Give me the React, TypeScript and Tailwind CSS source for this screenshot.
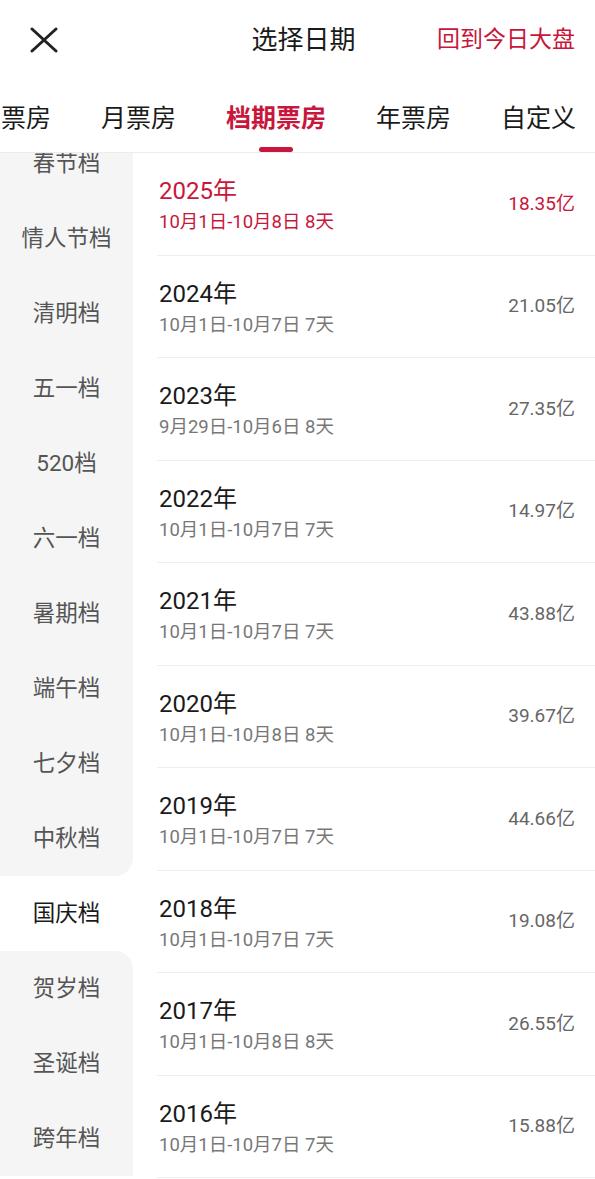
import React from "react";

const RED = "text-[#c8163c]";

const sideItems = ["春节档","情人节档","清明档","五一档","520档","六一档","暑期档","端午档","七夕档","中秋档","国庆档","贺岁档","圣诞档","跨年档"];
const selIdx = 10;

const rows = [
  { y: "2025年", d: "10月1日-10月8日 8天", v: "18.35" },
  { y: "2024年", d: "10月1日-10月7日 7天", v: "21.05" },
  { y: "2023年", d: "9月29日-10月6日 8天", v: "27.35" },
  { y: "2022年", d: "10月1日-10月7日 7天", v: "14.97" },
  { y: "2021年", d: "10月1日-10月7日 7天", v: "43.88" },
  { y: "2020年", d: "10月1日-10月8日 8天", v: "39.67" },
  { y: "2019年", d: "10月1日-10月7日 7天", v: "44.66" },
  { y: "2018年", d: "10月1日-10月7日 7天", v: "19.08" },
  { y: "2017年", d: "10月1日-10月8日 8天", v: "26.55" },
  { y: "2016年", d: "10月1日-10月7日 7天", v: "15.88" },
];

export default function App() {
  return (
    <div
      className="w-[595px] h-[1179px] overflow-hidden bg-white"
      style={{ fontFamily: 'Roboto, "Noto Sans CJK SC", "Noto Sans", sans-serif' }}
    >
      {/* header */}
      <div className="h-[78px] grid grid-cols-[1fr_auto_1fr] items-center pl-[30px] pr-[20px]">
        <div className="flex items-center">
          <svg width="28" height="26" viewBox="0 0 28 26" className="mt-[1px]">
            <path d="M2 2 L26 24 M26 2 L2 24" stroke="#222" strokeWidth="3" strokeLinecap="round" />
          </svg>
        </div>
        <div className="text-[26px] text-[#1a1a1a] leading-none pl-[2px] mt-[1px]">选择日期</div>
        <div className={`text-[23px] ${RED} leading-none text-right`}>回到今日大盘</div>
      </div>
      {/* tabs */}
      <div className="h-[75px] flex items-end border-b border-[#ececec] overflow-hidden">
        <div className="flex items-end gap-[50px] -ml-[24px] whitespace-nowrap text-[25px] leading-none text-[#1a1a1a]">
          <div className="pb-[21px]">日票房</div>
          <div className="pb-[21px]">月票房</div>
          <div className={`flex flex-col items-center font-bold ${RED}`}>
            <span>档期票房</span>
            <span className="mt-[16px] w-[34px] h-[5px] rounded-full bg-[#c8163c]" />
          </div>
          <div className="pb-[21px]">年票房</div>
          <div className="pb-[21px]">自定义</div>
        </div>
      </div>
      {/* content */}
      <div className="flex h-[1026px] overflow-hidden">
        <div className="w-[133px] shrink-0 overflow-hidden">
          <div className="-mt-[27px]">
            {sideItems.map((s, i) => (
              <div
                key={s}
                className={`h-[75px] flex items-center justify-center text-[22.5px] ${
                  i === selIdx
                    ? "bg-white text-[#1a1a1a]"
                    : "bg-[#f5f5f5] text-[#555]"
                } ${i === selIdx - 1 ? "rounded-br-[18px]" : ""} ${
                  i === selIdx + 1 ? "rounded-tr-[18px]" : ""
                }`}
              >
                {s}
              </div>
            ))}
          </div>
        </div>
        <div className="flex-1 pl-[24px]">
          {rows.map((r, i) => {
            const sel = i === 0;
            return (
              <div
                key={r.y}
                className="h-[102.5px] flex items-center border-b border-[#efefef] pl-[2px] pr-[20px]"
              >
                <div className="flex-1 flex flex-col pt-[3px]">
                  <div className={`text-[24px] leading-[30px] ${sel ? RED : "text-[#1a1a1a]"}`}>{r.y}</div>
                  <div className={`text-[18.5px] leading-[24px] mt-[4px] ${sel ? RED : "text-[#777]"}`}>{r.d}</div>
                </div>
                <div className={`text-[19px] ${sel ? RED : "text-[#666]"}`}>
                  {r.v}亿
                </div>
              </div>
            );
          })}
        </div>
      </div>
    </div>
  );
}
